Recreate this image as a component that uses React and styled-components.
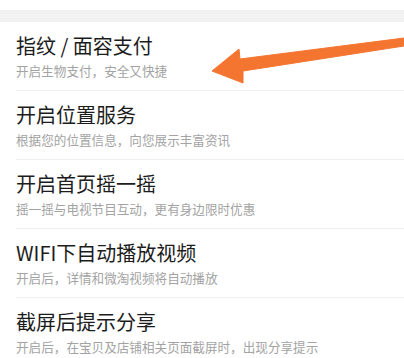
import styled, { createGlobalStyle } from "styled-components";

const GlobalStyle = createGlobalStyle`
  html, body {
    margin: 0;
    padding: 0;
    background: #fff;
  }
  body {
    font-family: "Noto Sans CJK SC", "Noto Sans", sans-serif;
    overflow: hidden;
  }
`;

const Page = styled.div`
  position: relative;
  width: 404px;
  height: 358px;
  overflow: hidden;
  background: #fff;
  padding-top: 10px;
  box-sizing: border-box;
`;

const Band = styled.div`
  height: 12px;
  background: #f2f2f2;
`;

const List = styled.div`
  display: flex;
  flex-direction: column;
`;

const Row = styled.div`
  padding-left: 16px;
`;

const RowBody = styled.div`
  display: flex;
  flex-direction: column;
  gap: 4px;
  padding: 12px 0 10px;
  border-bottom: 1px solid #efefef;
`;

const Title = styled.div`
  font-size: 20px;
  line-height: 24px;
  color: #1c1c1c;
  white-space: nowrap;
`;

const Subtitle = styled.div`
  font-size: 12.6px;
  line-height: 18px;
  color: #a3a3a3;
  white-space: nowrap;
`;

const Arrow = styled.svg`
  position: absolute;
  left: 0;
  top: 0;
  pointer-events: none;
`;

const items = [
  { title: "指纹 / 面容支付", sub: "开启生物支付，安全又快捷" },
  { title: "开启位置服务", sub: "根据您的位置信息，向您展示丰富资讯" },
  { title: "开启首页摇一摇", sub: "摇一摇与电视节目互动，更有身边限时优惠" },
  { title: "WIFI下自动播放视频", sub: "开启后，详情和微淘视频将自动播放" },
  { title: "截屏后提示分享", sub: "开启后，在宝贝及店铺相关页面截屏时，出现分享提示" },
];

export default function App() {
  return (
    <Page>
      <GlobalStyle />
      <Band />
      <List>
        {items.map((item) => (
          <Row key={item.title}>
            <RowBody>
              <Title>{item.title}</Title>
              <Subtitle>{item.sub}</Subtitle>
            </RowBody>
          </Row>
        ))}
      </List>
      <Arrow width="404" height="358" viewBox="0 0 404 358">
        <polygon
          points="212,71 239,49 240,59 404,38 404,46 243,71 243,83"
          fill="#f47530"
          strokeLinejoin="round"
          stroke="#f47530"
          strokeWidth="1"
        />
      </Arrow>
    </Page>
  );
}
